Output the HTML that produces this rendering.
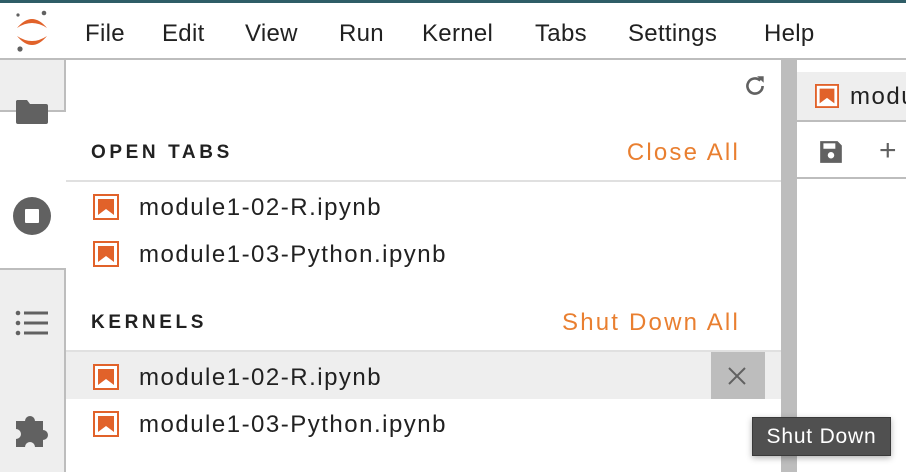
<!DOCTYPE html>
<html><head><style>
*{margin:0;padding:0;box-sizing:border-box}
body{width:906px;height:472px;overflow:hidden;background:#fff;font-family:"Liberation Sans",sans-serif;color:#212121;position:relative}
.a{position:absolute}
.menu{top:20px;font-size:24px;color:#212121;letter-spacing:0.3px}
.item{font-size:24px;color:#212121;letter-spacing:1.5px}
.hdr{font-size:19px;font-weight:bold;letter-spacing:3.6px;color:#212121}
.org{font-size:24px;color:#e97f30;letter-spacing:2.2px;right:166px;text-align:right}
.nb{width:26px;height:26px}
</style></head><body>
<div class="a" style="left:0;top:0;width:906px;height:3px;background:#2f5d67"></div>
<svg class="a" style="left:14px;top:10px" width="36" height="42" viewBox="0 0 36 42">
<path d="M3 18 Q18 0 33 18 Q18 8 3 18Z" fill="#e1622a"/>
<path d="M3 26 Q18 44 33 26 Q18 36 3 26Z" fill="#e1622a"/>
<circle cx="30" cy="3" r="2.3" fill="#616161"/><circle cx="4" cy="5" r="1.6" fill="#616161"/><circle cx="6" cy="39" r="2.6" fill="#616161"/>
</svg>
<div class="a menu" style="left:85px">File</div>
<div class="a menu" style="left:162px">Edit</div>
<div class="a menu" style="left:245px">View</div>
<div class="a menu" style="left:339px">Run</div>
<div class="a menu" style="left:422px">Kernel</div>
<div class="a menu" style="left:535px">Tabs</div>
<div class="a menu" style="left:628px">Settings</div>
<div class="a menu" style="left:764px">Help</div>
<div class="a" style="left:0;top:58px;width:906px;height:2px;background:#bdbdbd"></div>
<div class="a" style="left:0;top:60px;width:64px;height:412px;background:#eee"></div>
<div class="a" style="left:64px;top:60px;width:2px;height:412px;background:#bdbdbd"></div>
<div class="a" style="left:0;top:110px;width:66px;height:160px;background:#fff;border-top:2px solid #bdbdbd;border-bottom:2px solid #bdbdbd"></div>
<svg class="a" style="left:15px;top:98px" width="34" height="28" viewBox="0 0 34 28"><path d="M2 2h10l3 4h16a2 2 0 0 1 2 2v16a2 2 0 0 1-2 2H3a2 2 0 0 1-2-2V3z" fill="#616161"/></svg>
<svg class="a" style="left:12px;top:196px" width="40" height="40" viewBox="0 0 40 40"><circle cx="20" cy="20" r="19" fill="#616161"/><rect x="13" y="13" width="14" height="14" rx="1" fill="#fff"/></svg>
<svg class="a" style="left:15px;top:310px" width="34" height="26" viewBox="0 0 34 26"><g fill="#616161"><circle cx="3" cy="3" r="2.3"/><circle cx="3" cy="13" r="2.3"/><circle cx="3" cy="23" r="2.3"/><rect x="9" y="1.5" width="24" height="3"/><rect x="9" y="11.5" width="24" height="3"/><rect x="9" y="21.5" width="24" height="3"/></g></svg>
<svg class="a" style="left:14px;top:411px" width="38" height="38" viewBox="0 0 38 38"><path d="M2 10h9a5 5 0 1 1 10 0h8v9a5 5 0 1 1 0 10v7h-8a5 5 0 1 0-10 0H2v-8a5 5 0 1 0 0-10z" fill="#616161"/></svg>
<svg class="a" style="left:742px;top:73px" width="26" height="26" viewBox="0 0 24 24"><path d="M19 12a7 7 0 1 1-2.1-5" fill="none" stroke="#616161" stroke-width="2.4"/><path d="M14 3h6v6z" fill="#616161"/></svg>
<div class="a hdr" style="left:91px;top:142px">OPEN TABS</div>
<div class="a org" style="top:139px">Close All</div>
<div class="a" style="left:66px;top:180px;width:715px;height:2px;background:#e0e0e0"></div>
<div class="a hdr" style="left:91px;top:312px">KERNELS</div>
<div class="a org" style="top:309px">Shut Down All</div>
<div class="a" style="left:66px;top:350px;width:715px;height:2px;background:#e0e0e0"></div>
<div class="a" style="left:66px;top:352px;width:715px;height:47px;background:#eee"></div>
<div class="a" style="left:711px;top:352px;width:54px;height:47px;background:#bdbdbd"></div>
<svg class="a" style="left:727px;top:366px" width="20" height="20" viewBox="0 0 20 20"><path d="M2 2L18 18M18 2L2 18" stroke="#616161" stroke-width="2"/></svg>
<svg width="0" height="0" style="position:absolute"><defs><symbol id="nb" viewBox="0 0 26 26"><rect x="1" y="1" width="24" height="24" fill="#fff" stroke="#e1622a" stroke-width="2"/><path d="M5 5h16v16l-8-6-8 6z" fill="#e1622a"/></symbol></defs></svg>
<svg class="a nb" style="left:93px;top:194px"><use href="#nb"/></svg>
<svg class="a nb" style="left:93px;top:241px"><use href="#nb"/></svg>
<svg class="a nb" style="left:93px;top:364px"><use href="#nb"/></svg>
<svg class="a nb" style="left:93px;top:411px"><use href="#nb"/></svg>
<div class="a item" style="left:139px;top:194px">module1-02-R.ipynb</div>
<div class="a item" style="left:139px;top:241px">module1-03-Python.ipynb</div>
<div class="a item" style="left:139px;top:364px">module1-02-R.ipynb</div>
<div class="a item" style="left:139px;top:411px">module1-03-Python.ipynb</div>
<div class="a" style="left:781px;top:60px;width:16px;height:412px;background:#bdbdbd"></div>
<div class="a" style="left:797px;top:72px;width:109px;height:48px;background:#eee"></div>
<div class="a" style="left:797px;top:120px;width:109px;height:2px;background:#bdbdbd"></div>
<svg class="a" style="left:815px;top:84px;width:24px;height:24px"><use href="#nb"/></svg>
<div class="a item" style="left:850px;top:83px">module</div>
<svg class="a" style="left:818px;top:139px" width="26" height="26" viewBox="0 0 24 24"><path d="M2 2h16l4 4v16H2z" fill="#616161"/><rect x="5" y="4" width="11" height="5" fill="#fff"/><circle cx="12" cy="15" r="3" fill="#fff"/></svg>
<div class="a" style="left:879px;top:134px;font-size:30px;color:#616161">+</div>
<div class="a" style="left:797px;top:177px;width:109px;height:2px;background:#bdbdbd"></div>
<div class="a" style="left:752px;top:417px;width:139px;height:39px;background:#505050;border:1px solid #3a3a3a;color:#fff;font-size:21px;line-height:37px;text-align:center;letter-spacing:0.8px;box-shadow:0 2px 6px rgba(0,0,0,.3)">Shut Down</div>
</body></html>
